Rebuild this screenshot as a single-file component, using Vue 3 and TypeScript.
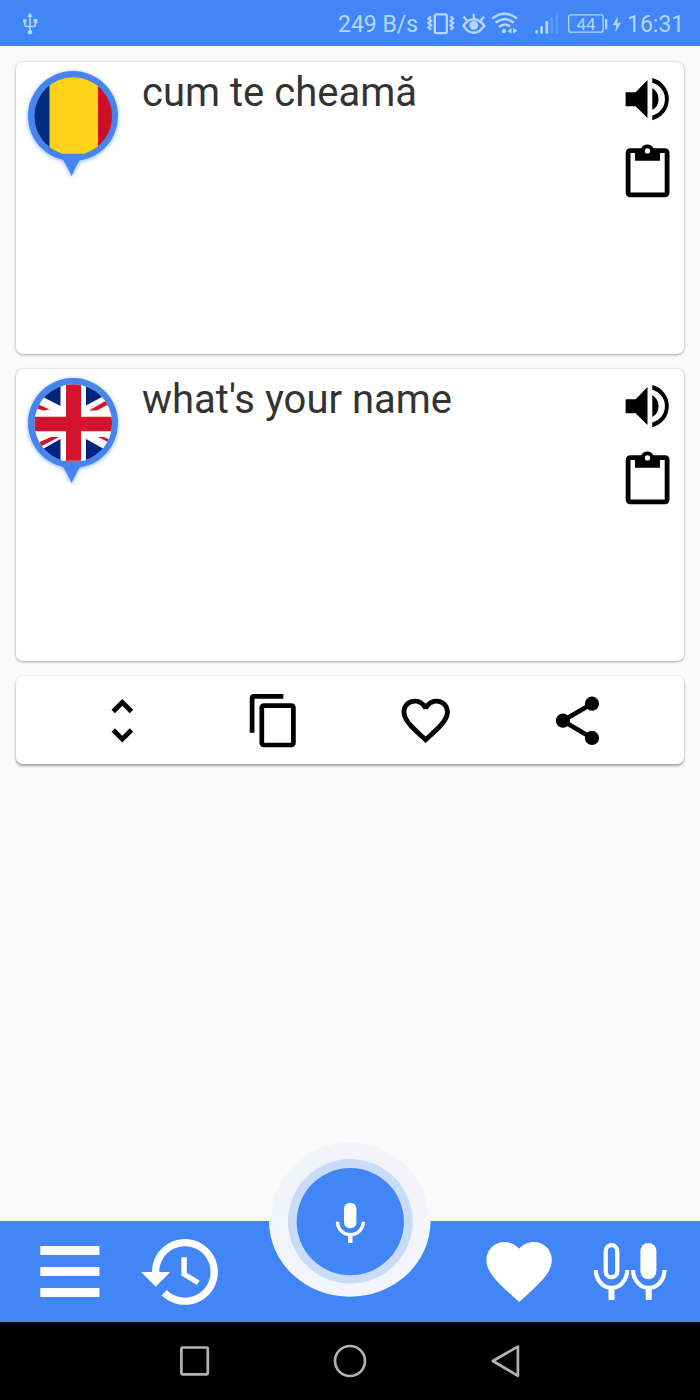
<script setup lang="ts">
interface Panel {
  id: string
  text: string
  flag: 'ro' | 'gb'
}

const panels: Panel[] = [
  { id: 'source', text: 'cum te cheamă', flag: 'ro' },
  { id: 'target', text: "what's your name", flag: 'gb' },
]
</script>

<template>
  <div class="screen">
    <header class="status">
      <svg class="usb" width="20" height="46" viewBox="20 0 20 46">
        <g fill="none" stroke="currentColor" stroke-width="1.5">
          <path d="M30 15V32M24.7 21V24Q24.7 26.6 27.5 26.6H32.5Q35.5 26.6 35.5 24V21" />
        </g>
        <path d="M30 12.5L32.6 17H27.4Z" fill="currentColor" />
        <circle cx="30" cy="32.3" r="2.2" fill="currentColor" />
        <circle cx="24.7" cy="20.8" r="1.9" fill="currentColor" />
        <rect x="33.6" y="19" width="3.8" height="3.8" fill="currentColor" />
      </svg>
      <span class="speed">249 B/s</span>
      <svg width="31" height="46" viewBox="426 0 31 46" fill="none" stroke="currentColor">
        <rect x="434.8" y="14.3" width="12" height="18.8" rx="1.5" stroke-width="2.3" />
        <path d="M431 16.5l-2.4 2.2 2.4 2.2-2.4 2.2 2.4 2.2-2.4 2.2 2.4 2.4M450.6 16.5l2.4 2.2-2.4 2.2 2.4 2.2-2.4 2.2 2.4 2.2-2.4 2.4" stroke-width="2.4" />
      </svg>
      <svg width="31" height="46" viewBox="457 0 31 46" fill="none" stroke="currentColor">
        <path d="M463.5 25.8Q468 19.3 473.8 19.3T484.3 25.8Q479.5 32.8 473.8 32.8T463.5 25.8Z" stroke-width="2.4" />
        <path d="M473.8 13.8V19M463.6 16.5l3.6 4.5M484 16.5l-3.6 4.5" stroke-width="2.3" />
        <circle cx="473.8" cy="25.4" r="4.4" fill="currentColor" stroke="none" />
      </svg>
      <svg width="40" height="46" viewBox="488 0 40 46" fill="none" stroke="currentColor">
        <path d="M492.3 18.5Q504.7 9 517 18.5M495.6 22.8Q504.7 15.5 513.7 22.8M499 27Q504.7 22.2 510.3 26.5" stroke-width="2.4" />
        <circle cx="504" cy="31" r="2.2" fill="currentColor" stroke="none" />
        <path d="M511.6 28V33.8L507.4 31.2ZM513.1 27.8V33.8L517.3 30.7Z" fill="currentColor" stroke="none" />
      </svg>
      <svg width="34" height="46" viewBox="528 0 34 46" fill="currentColor">
        <rect x="535.4" y="30" width="2.5" height="3.8" rx="1" />
        <rect x="540.3" y="26" width="2.6" height="7.8" rx="1" />
        <rect x="545.4" y="21" width="2.8" height="12.8" rx="1" />
        <rect x="550.4" y="17" width="2.6" height="16.8" rx="1" opacity=".25" />
        <rect x="555.6" y="12.5" width="2.6" height="21.3" rx="1" opacity=".25" />
      </svg>
      <svg width="49" height="46" viewBox="562 0 49 46">
        <rect x="568.7" y="14.8" width="34.4" height="17.4" rx="2" fill="none" stroke="currentColor" stroke-width="1.3" />
        <rect x="605" y="18.7" width="2.3" height="10.5" rx="1" fill="currentColor" />
        <text class="charge" x="586" y="30" text-anchor="middle">44</text>
      </svg>
      <svg width="16" height="46" viewBox="611 0 16 46">
        <path d="M618 16.3L612.5 25.3H616.2L615.2 32.5L621 22.7H617.2Z" fill="currentColor" />
      </svg>
      <span class="time">16:31</span>
    </header>

    <main class="content">
      <section v-for="panel in panels" :key="panel.id" class="card panel">
        <svg class="pin" width="104" height="124" viewBox="20 62 104 124">
          <defs>
            <clipPath :id="`disc-${panel.id}`">
              <path d="M34.5 116A38.8 38.8 0 0 1 112.1 116A38.8 38.8 0 0 1 84 153.7H62.5A38.8 38.8 0 0 1 34.5 116Z" />
            </clipPath>
          </defs>
          <g class="pin-shape">
            <circle cx="73" cy="116" r="45" />
            <path d="M61 157Q65 162 71.6 176Q78 162 82 157Z" />
          </g>
          <g :clip-path="`url(#disc-${panel.id})`">
            <template v-if="panel.flag === 'ro'">
              <rect x="34" y="76" width="16" height="80" fill="#002d80" />
              <rect x="49.5" y="76" width="49" height="80" fill="#fcd116" />
              <rect x="98" y="76" width="16" height="80" fill="#ce1126" />
            </template>
            <template v-else>
              <rect x="34" y="76" width="80" height="80" fill="#fff" />
              <path d="M60.5 76V99L34 85.5V76ZM86 76V98.5L113 84V76ZM60.5 156V132L34 147V156ZM86 156V132L113 147V156Z" fill="#00247d" />
              <path d="M34 95.5L49.5 102.5L44 103.5L34 101ZM89 103.5L110 91.5V96.5L97 103.5ZM34 137.5L51 130H59L38 141ZM98 130H104L114 134.5V138Z" fill="#d3142c" />
              <path d="M73.5 76V156" stroke="#d3142c" stroke-width="15" />
              <path d="M34 117H114" stroke="#d3142c" stroke-width="14.5" />
            </template>
          </g>
        </svg>
        <p class="phrase">{{ panel.text }}</p>
        <svg class="tools" width="54" height="136" viewBox="620 66 54 136">
          <path d="M625.6 92.3H635.6L647.5 80V118L635.6 106.3H625.6ZM652.3 88Q658.5 92 658.5 99.2T652.3 110Z" />
          <path d="M652.3 78A21.8 21.8 0 0 1 652.3 120.3V115.5A16.9 16.9 0 0 0 652.3 82.8Z" />
          <rect x="628.1" y="150.7" width="39" height="44.1" rx="2" fill="none" stroke="#000" stroke-width="4.8" />
          <path d="M635 149H641A6.7 6.7 0 0 1 653.7 149H660V160.7H635Z" />
          <circle cx="647.5" cy="150.9" r="2.6" fill="#fff" />
        </svg>
      </section>

      <section class="card actions">
        <svg width="52" height="60" viewBox="96 690 52 60" fill="none" stroke="#000" stroke-width="4.8">
          <path d="M113.2 711.5L122.3 702.3L131.5 711.5M113.2 730L122.3 739.2L131.5 730" />
        </svg>
        <svg width="52" height="60" viewBox="248.3 690 52 60" fill="none" stroke="#000" stroke-width="4.7">
          <path d="M252.4 732.7V698.4Q252.4 696.4 254.4 696.4H283.7" />
          <rect x="262.1" y="705.7" width="31.6" height="39.3" rx="2" />
        </svg>
        <svg width="52" height="60" viewBox="399.2 690 52 60">
          <path transform="translate(396.9 691.4) scale(2.415)" d="M16.5 3c-1.74 0-3.41.81-4.5 2.09C10.91 3.81 9.24 3 7.5 3 4.42 3 2 5.42 2 8.5c0 3.78 3.4 6.86 8.55 11.54L12 21.35l1.45-1.32C18.6 15.36 22 12.28 22 8.5 22 5.42 19.58 3 16.5 3zm-4.4 15.55l-.1.1-.1-.1C7.14 14.24 4 11.39 4 8.5 4 6.5 5.5 5 7.5 5c1.54 0 3.04.99 3.57 2.36h1.87C13.46 5.99 14.96 5 16.5 5c2 0 3.5 1.5 3.5 3.5 0 2.89-3.14 5.74-7.9 10.05z" />
        </svg>
        <svg width="52" height="60" viewBox="551 690 52 60">
          <path d="M592 703.7L562.7 720.7L592 738" fill="none" stroke="#000" stroke-width="4.6" />
          <circle cx="592" cy="703.7" r="7.1" />
          <circle cx="562.9" cy="720.7" r="7.1" />
          <circle cx="592" cy="737.9" r="7.1" />
        </svg>
      </section>
    </main>

    <nav class="tabs">
      <svg width="70" height="80" viewBox="35 1232 70 80">
        <path d="M40.3 1246H99.4V1255H40.3ZM40.3 1267H99.4V1276H40.3ZM40.3 1288H99.4V1297H40.3Z" />
      </svg>
      <svg class="history" width="84" height="80" viewBox="138 1232 84 80">
        <path transform="translate(137.4 1228) scale(3.66)" d="M13 3c-4.97 0-9 4.03-9 9H1l3.89 3.89.07.14L9 12H6c0-3.87 3.13-7 7-7s7 3.13 7 7-3.13 7-7 7c-1.93 0-3.68-.79-4.94-2.06l-1.42 1.42C8.27 19.99 10.51 21 13 21c4.97 0 9-4.03 9-9s-4.03-9-9-9zm-1 5v5l4.28 2.54.72-1.21-3.5-2.08V8H12z" />
      </svg>
      <svg class="saved" width="72" height="80" viewBox="483 1232 72 80">
        <path transform="translate(479.9 1232.2) scale(3.27)" d="M12 21.35l-1.45-1.32C5.4 15.36 2 12.28 2 8.5 2 5.42 4.42 3 7.5 3c1.74 0 3.41.81 4.5 2.09C13.09 3.81 14.76 3 16.5 3 19.58 3 22 5.42 22 8.5c0 3.78-3.4 6.86-8.55 11.54L12 21.35z" />
      </svg>
      <svg class="duo" width="80" height="80" viewBox="590 1232 80 80">
        <rect x="605.7" y="1245.2" width="11.6" height="32" rx="5.8" fill="none" stroke="#fff" stroke-width="4.3" />
        <rect x="640.4" y="1243" width="16" height="36.3" rx="8" />
        <g fill="none" stroke="#fff">
          <path d="M595.8 1270A15.7 17.8 0 0 0 627.2 1270M633.1 1270A15.7 17.8 0 0 0 664.5 1270" stroke-width="4.2" />
          <path d="M611.5 1287V1300M648.7 1287V1300" stroke-width="6" />
        </g>
      </svg>

      <svg class="record" width="170" height="164" viewBox="265 1138 170 164">
        <path d="M271 1221.5A79 79 0 0 1 429 1221.5Z" fill="#f3f4fa" />
        <path d="M269 1221H430.6A80.8 75.8 0 0 1 269 1221Z" fill="#f2f5fc" />
        <circle cx="350.3" cy="1221.3" r="62.3" fill="#c8dbf8" />
        <circle cx="350.3" cy="1221.7" r="53.6" fill="#4285f7" />
        <rect x="344" y="1202.7" width="12.4" height="25.5" rx="6" fill="#fff" />
        <path d="M337.5 1221.7A12.9 13 0 0 0 363.3 1221.7" fill="none" stroke="#fff" stroke-width="3.4" />
        <path d="M350.3 1235V1243" stroke="#fff" stroke-width="4.4" />
      </svg>
    </nav>

    <footer class="system">
      <svg width="36" height="36" viewBox="176 1343 36 36">
        <rect x="181.4" y="1347.5" width="26.4" height="26.8" rx="1" />
      </svg>
      <svg width="36" height="36" viewBox="332 1343 36 36">
        <circle cx="350" cy="1361" r="15" />
      </svg>
      <svg width="36" height="36" viewBox="488 1343 36 36">
        <path d="M492.9 1361L517.9 1346.6V1375.8Z" stroke-linejoin="round" />
      </svg>
    </footer>
  </div>
</template>

<style>
body {
  margin: 0;
}
</style>

<style scoped>
.screen {
  width: 700px;
  height: 1400px;
  display: flex;
  flex-direction: column;
  overflow: hidden;
  background: #fafafa;
  font-family: Roboto, 'Liberation Sans', sans-serif;
}

svg {
  display: block;
  flex: none;
}

.status {
  height: 46px;
  flex: none;
  display: flex;
  align-items: center;
  padding-left: 20px;
  background: #4285f7;
  color: #b4d6fe;
  font-size: 23px;
  line-height: 46px;
  white-space: nowrap;
}

.usb {
  margin-right: 298px;
}

.speed {
  width: 88px;
  padding-top: 4px;
}

.time {
  padding-top: 4px;
}

.charge {
  font-size: 17px;
  fill: currentColor;
}

.content {
  flex: 1;
  display: flex;
  flex-direction: column;
  gap: 15px;
  padding: 16px;
}

.card {
  flex: none;
  background: #fff;
  border-radius: 7px;
  box-shadow: 0 1px 3px rgba(0, 0, 0, 0.3), 0 0 2px rgba(0, 0, 0, 0.12);
}

.panel {
  height: 292px;
  display: flex;
  align-items: flex-start;
}

.pin {
  margin-left: 4px;
}

.pin-shape {
  fill: #4685ed;
  filter: drop-shadow(0 1px 2px rgba(66, 133, 247, 0.65));
}

.phrase {
  flex: 1;
  margin: 0 0 0 18px;
  padding-top: 7px;
  color: #333;
  font-size: 40px;
  line-height: 48px;
  white-space: nowrap;
}

.tools {
  margin: 4px 10px 0 0;
}

.actions {
  height: 88px;
  display: flex;
  align-items: center;
  justify-content: space-between;
  padding: 0 81px 0 80px;
  box-shadow: 0 2px 3px rgba(0, 0, 0, 0.34), 0 0 2px rgba(0, 0, 0, 0.1);
}

.tabs {
  position: relative;
  height: 101px;
  flex: none;
  display: flex;
  align-items: center;
  padding-left: 35px;
  background: #4285f7;
  fill: #fff;
}

.history {
  margin-left: 33px;
}

.saved {
  margin-left: 261px;
}

.duo {
  margin-left: 35px;
}

.record {
  position: absolute;
  left: 265px;
  top: -83px;
}

.system {
  height: 78px;
  flex: none;
  display: flex;
  align-items: center;
  justify-content: center;
  gap: 120px;
  background: #000;
  fill: none;
  stroke: #b2b2b2;
  stroke-width: 2.7px;
}
</style>
